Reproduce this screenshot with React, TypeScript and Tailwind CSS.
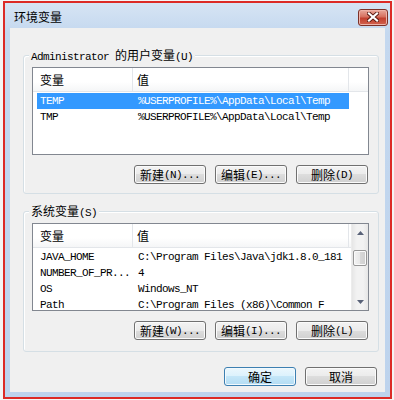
import React from "react";

const cjkFont = "font-['Noto_Sans_CJK_SC',sans-serif]";
const monoFont = "font-['Liberation_Mono','Noto_Sans_CJK_SC',monospace]";

function Mixed({text}: {text: string}) {
    const parts = text.split(/([\u4e00-\u9fff]+)/).filter(p => p !== "");
    return (
        <>
            {parts.map((p, i) =>
                /[\u4e00-\u9fff]/.test(p)
                    ? <span key={i} className={`${cjkFont} text-[12px] tracking-normal`}>{p}</span>
                    : <span key={i} className={`${monoFont} text-[11px] tracking-[-0.6px]`}>{p}</span>
            )}
        </>
    );
}

function Btn({label, primary}: {label: string; primary?: boolean}) {
    return (
        <button
            className={
                primary
                    ? "w-[72px] h-[19px] rounded-[3px] border border-[#3c7fb1] bg-[linear-gradient(#ebf7fd,#dbf1fc_50%,#c4e6f8_50%,#b3dcf3)] shadow-[inset_0_0_0_1px_#f2f9fd] flex items-center justify-center leading-[14px] text-black"
                    : "w-[72px] h-[19px] rounded-[3px] border border-[#707070] bg-[linear-gradient(#f3f3f3,#ebebeb_50%,#dddddd_50%,#d0d0d0)] shadow-[inset_0_0_0_1px_#fbfbfb] flex items-center justify-center leading-[14px] text-black"
            }>
            <Mixed text={label}/>
        </button>
    );
}

function Arrow({up}: {up?: boolean}) {
    return (
        <div className="h-[17px] flex items-center justify-center">
            <svg width="7" height="4" viewBox="0 0 7 4">
                {up
                    ? <polygon points="3.5,0 7,4 0,4" fill="#596278"/>
                    : <polygon points="0,0 7,0 3.5,4" fill="#596278"/>}
            </svg>
        </div>
    );
}

function Scrollbar() {
    return (
        <div className="w-[17px] flex flex-col bg-[linear-gradient(90deg,#e6e6e6,#f2f2f2_30%,#f2f2f2_70%,#e6e6e6)] border-l border-[#ececec]">
            <Arrow up/>
            <div className="h-[9px]"/>
            <div className="mx-[1px] h-[16px] rounded-[2px] border border-[#979797] bg-[linear-gradient(90deg,#f3f3f3,#e8e8e8_50%,#d8d8d8_50%,#cfcfcf)] shadow-[inset_0_0_0_1px_#fafafa]"/>
            <div className="flex-1"/>
            <Arrow/>
        </div>
    );
}

type Row = [string, string];

function VarList({rows, selected, scroll}: {rows: Row[]; selected?: number; scroll?: boolean}) {
    return (
        <div className="w-[337px] h-[88px] border border-[#828790] bg-white flex overflow-hidden">
            <div className="flex-1 flex flex-col min-w-0">
                <div className="h-[24px] flex shrink-0 border-b border-[#e3e6ea] bg-[linear-gradient(#ffffff,#ffffff_60%,#f5f6f7)]">
                    <div className={`w-[100px] pl-[7px] border-r border-[#e3e6ea] flex items-center text-[12px] ${cjkFont}`}>变量</div>
                    <div className={`w-[216px] pl-[4px] border-r border-[#e3e6ea] flex items-center text-[12px] ${cjkFont}`}>值</div>
                </div>
                <div className="pt-[1px] flex flex-col">
                    {rows.map((r, i) => (
                        <div key={i}
                             className={`ml-[4px] w-[312px] h-[16px] shrink-0 flex items-center leading-[16px] ${monoFont} text-[11px] tracking-[-0.6px] ${i === selected ? "bg-[#3399ff] text-white" : "text-black"}`}>
                            <div className="w-[96px] pl-[3px] whitespace-nowrap overflow-hidden">{r[0]}</div>
                            <div className="flex-1 pl-[5px] whitespace-nowrap overflow-hidden">{r[1]}</div>
                        </div>
                    ))}
                </div>
            </div>
            {scroll && <Scrollbar/>}
        </div>
    );
}

function Group({title, rows, selected, scroll, buttons, className}: {
    title: string; rows: Row[]; selected?: number; scroll?: boolean; buttons: string[]; className: string;
}) {
    return (
        <div className={`relative ml-[13px] w-[356px] border border-[#d5dfe5] rounded-[3px] pt-[11px] pl-[8px] shadow-[inset_1px_1px_0_#ffffff] ${className}`}>
            <div className="absolute left-[5px] -top-[9px] px-[2px] bg-[#f0f0f0] leading-[14px] text-black whitespace-nowrap">
                <Mixed text={title}/>
            </div>
            <VarList rows={rows} selected={selected} scroll={scroll}/>
            <div className="flex justify-end gap-[9px] pr-[10px] mt-[10px]">
                {buttons.map(b => <Btn key={b} label={b}/>)}
            </div>
        </div>
    );
}

function CloseButton() {
    return (
        <div className="w-[30px] h-[17px] rounded-[3px] border border-[#7d3128] bg-[linear-gradient(#e9a99c,#d6705f_45%,#c2402f_55%,#d2634f)] shadow-[inset_0_0_0_1px_#eeb3a8] flex items-center justify-center">
            <svg width="12" height="10" viewBox="0 0 12 10">
                <path d="M2 1.5 L10 8.5 M10 1.5 L2 8.5" stroke="#5a1a12" strokeWidth="4" strokeLinecap="square"/>
                <path d="M2 1.5 L10 8.5 M10 1.5 L2 8.5" stroke="#ffffff" strokeWidth="2.2" strokeLinecap="square"/>
            </svg>
        </div>
    );
}

export default function App() {
    const userVars: Row[] = [
        ["TEMP", "%USERPROFILE%\\AppData\\Local\\Temp"],
        ["TMP", "%USERPROFILE%\\AppData\\Local\\Temp"],
    ];
    const sysVars: Row[] = [
        ["JAVA_HOME", "C:\\Program Files\\Java\\jdk1.8.0_181"],
        ["NUMBER_OF_PR...", "4"],
        ["OS", "Windows_NT"],
        ["Path", "C:\\Program Files (x86)\\Common F"],
    ];

    return (
        <div className="w-[394px] h-[400px] bg-[#f4f4f4] pl-[3px] pt-[1px]">
            <div className="w-[389px] h-[398px] border-2 border-[#dc2a26] flex flex-col bg-[linear-gradient(#d6e4f4,#c4d8ef_30px,#bdd3ed)]">
                <div className="h-[25px] shrink-0 flex items-center justify-between pl-[9px] pr-[2px] pt-[3px]">
                    <span className={`text-[12px] leading-[14px] text-black ${cjkFont}`}>环境变量</span>
                    <CloseButton/>
                </div>
                <div className="mx-[5px] h-[364px] bg-[#f0f0f0] flex flex-col">
                    <Group className="mt-[27px] h-[139px]"
                           title="Administrator 的用户变量(U)"
                           rows={userVars}
                           selected={0}
                           buttons={["新建(N)...", "编辑(E)...", "删除(D)"]}/>
                    <Group className="mt-[17px] h-[141px]"
                           title="系统变量(S)"
                           rows={sysVars}
                           scroll
                           buttons={["新建(W)...", "编辑(I)...", "删除(L)"]}/>
                    <div className="flex justify-end gap-[9px] pr-[8px] mt-[15px]">
                        <Btn label="确定" primary/>
                        <Btn label="取消"/>
                    </div>
                </div>
            </div>
        </div>
    );
}
